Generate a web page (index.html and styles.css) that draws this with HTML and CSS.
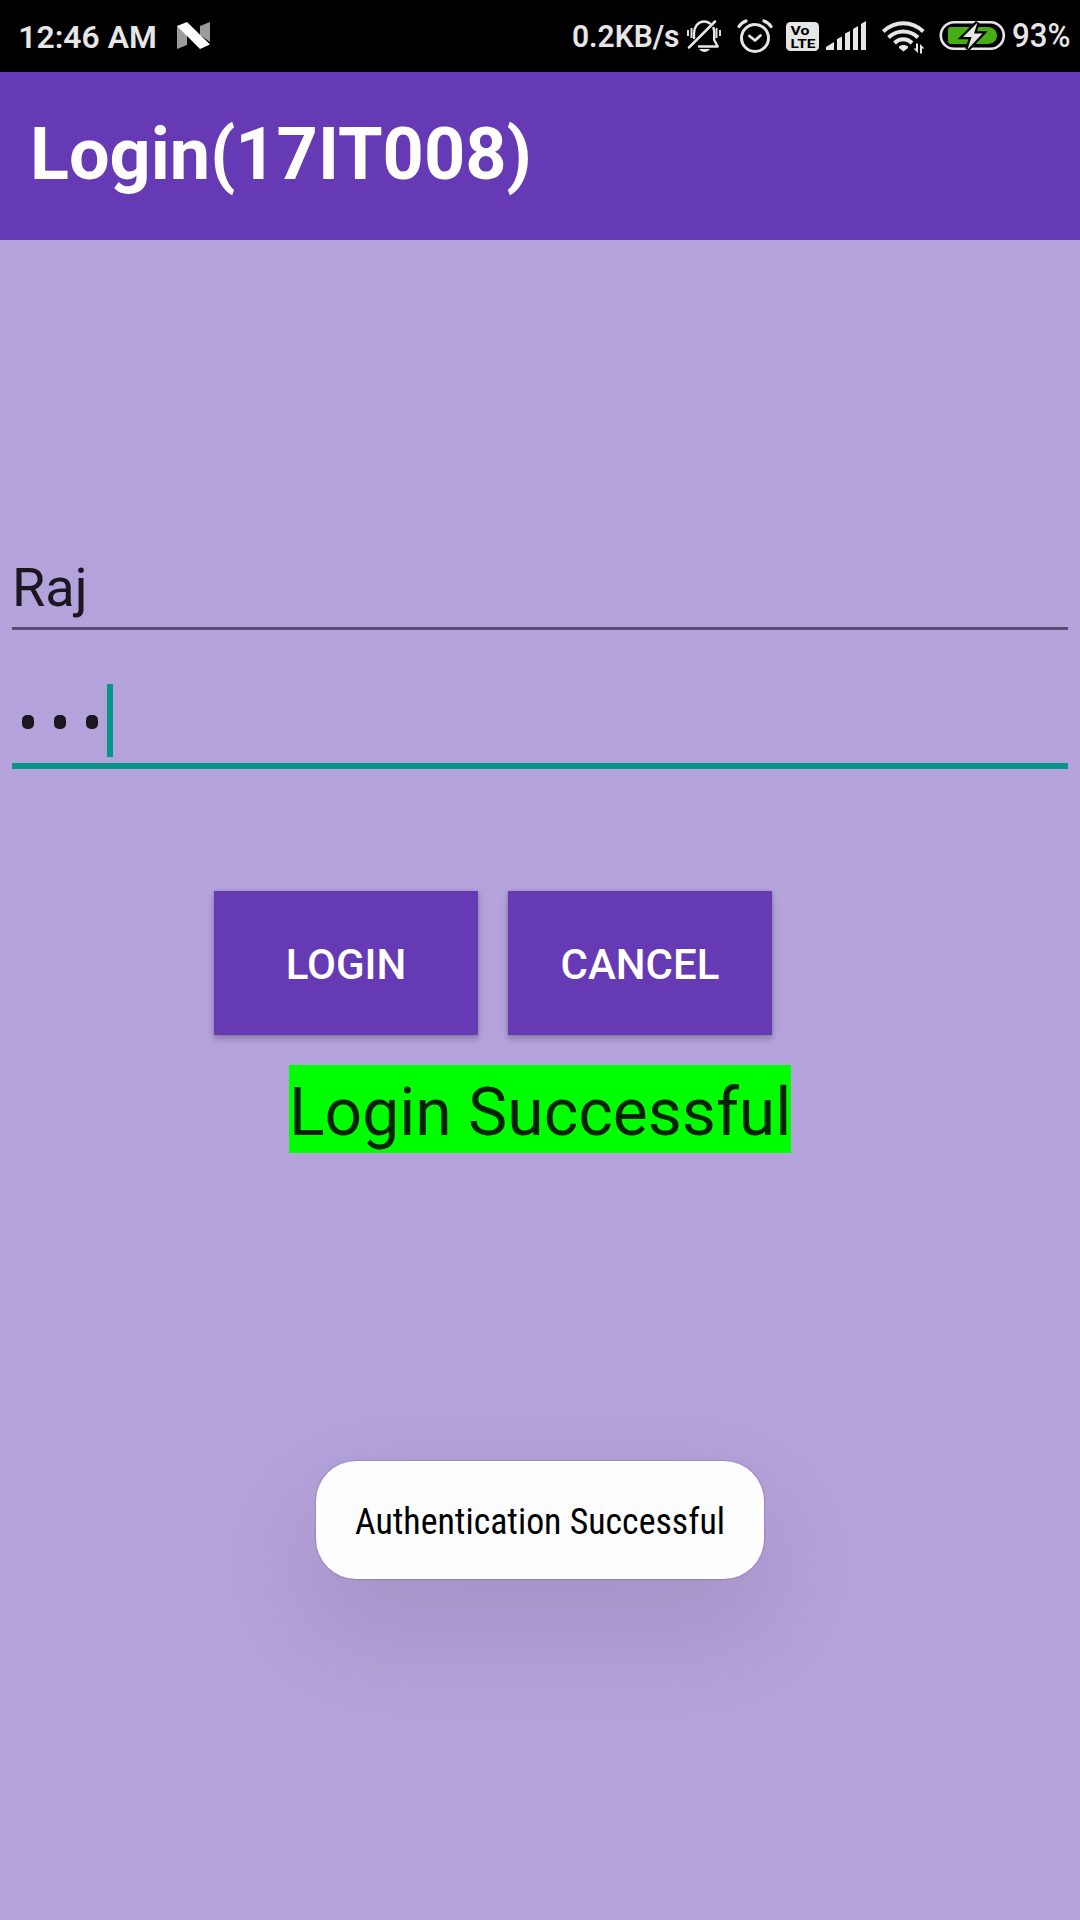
FILE: index.html
```
<!DOCTYPE html>
<html lang="en">
<head>
<meta charset="utf-8">
<title>Login</title>
<link rel="stylesheet" href="styles.css">
</head>
<body>
<div class="screen">
  <header class="status">
    <svg class="clock" viewBox="0 0 160 72"><text x="18.300" y="47.700" textLength="138.500" lengthAdjust="spacingAndGlyphs">12:46 AM</text></svg>
    <svg class="nougat" viewBox="176 0 36 72">
      <path fill="#9c9c9c" d="M177 26l10 5v14l-10 4zM200 26l10-4v20l-10-7z"/>
      <path fill="#fff" d="M177 26l10-4 23 22.500-10 4.500z"/>
    </svg>
    <div class="spacer"></div>
    <svg class="speed" viewBox="570 0 114 72"><text x="572" y="46.700" textLength="107.500" lengthAdjust="spacingAndGlyphs">0.2KB/s</text></svg>
    <svg class="bell" viewBox="684 0 42 72">
      <g fill="none" stroke="#e6e6e6" stroke-width="2.400" stroke-linecap="round" stroke-linejoin="round">
        <path d="M694 38v-5c0-6 4-11.500 10-11.500 2.500 0 4.500.8 6 2M713.500 28c.5 1.500.7 3 .7 5v7l3.500 6.500H699"/>
        <path stroke-width="2.500" d="M689 47.500l26-26"/>
        <path stroke-width="1.900" stroke-linecap="butt" d="M688 30v6M691.500 28v10M716.500 28v10M720 30v6"/>
      </g>
      <path fill="#e6e6e6" d="M699 49h11c-1.500 2-3.500 3-5.500 3s-4-1-5.500-3z"/>
    </svg>
    <svg class="alarm" viewBox="734 0 42 72">
      <g fill="none" stroke="#e6e6e6" stroke-linecap="round" stroke-linejoin="round">
        <circle cx="755" cy="38" r="13.500" stroke-width="3"/>
        <path stroke-width="2.800" d="M749.500 36l5.500 4.500 5.500-5"/>
        <path stroke-width="3.200" d="M739 26.500c1.500-2.500 4-4.500 7-5.500M771 26.500c-1.500-2.500-4-4.500-7-5.500"/>
      </g>
    </svg>
    <svg class="volte" viewBox="784 0 38 72">
      <rect x="786" y="22" width="33" height="29" rx="4.500" fill="#e6e6e6"/>
      <text x="790.500" y="35" textLength="19" lengthAdjust="spacingAndGlyphs">Vo</text>
      <text x="790.500" y="47.700" textLength="25" lengthAdjust="spacingAndGlyphs">LTE</text>
    </svg>
    <svg class="signal" viewBox="824 0 44 72">
      <path fill="#e6e6e6" d="M826 50v-3l8-5v8zM837 50V39l5-2.500V50zM845 50V33.500l5-2.500V50zM853 50V29l5-3v24zM861 50V24l5-3v29z"/>
    </svg>
    <svg class="wifi" viewBox="880 0 46 72">
      <g fill="none" stroke="#e6e6e6" stroke-width="3.900">
        <path d="M883.300 31.500c11.500-11 28.500-11 40 0"/>
        <path d="M888.500 37.500c8.500-8 21-8 29.500 0"/>
        <path d="M894.500 43c5-5 12.500-5 17.500 0"/>
      </g>
      <path fill="#e6e6e6" d="M899 46.500c2.500-2 6.500-2 9 0v1.500l-4.500 3.500-4.500-3.500z"/>
      <path fill="#e6e6e6" d="M916 43.500h2v9.500l-4.500-4.500h2.500zM920 53.500V44l4.500 4.500h-2.500v5z"/>
    </svg>
    <svg class="battery" viewBox="938 0 68 72">
      <rect x="940.800" y="22.200" width="63" height="26.600" rx="13.300" fill="none" stroke="#e6e6e6" stroke-width="2.600"/>
      <path fill="#45ad15" d="M951 27h37c5 0 9 4 9 8.500s-4 8.500-9 8.500h-37c-2 0-3-1-3-2.500V29.500c0-1.500 1-2.500 3-2.500z"/>
      <path fill="#e6e6e6" stroke="#000" stroke-width="4.500" paint-order="stroke" d="M977.500 22.500l-14.500 14.500h8.500l-4 12.500 15-16h-8.500z"/>
    </svg>
    <svg class="percent" viewBox="1010 0 64 72"><text x="1012" y="47.300" textLength="58.500" lengthAdjust="spacingAndGlyphs">93%</text></svg>
  </header>
  <h1 class="appbar">Login(17IT008)</h1>
  <main class="form">
    <div class="field name">Raj</div>
    <div class="field password">
      <span class="dot"></span><span class="dot"></span><span class="dot"></span><span class="caret"></span>
    </div>
    <div class="actions">
      <button class="button" type="button">LOGIN</button>
      <button class="button" type="button">CANCEL</button>
    </div>
    <div class="result">Login Successful</div>
  </main>
  <div class="toast">
    <svg class="message" viewBox="0 0 372 60"><text x="1" y="44" textLength="370" lengthAdjust="spacingAndGlyphs">Authentication Successful</text></svg>
  </div>
</div>
</body>
</html>
```
FILE: styles.css
```
* { box-sizing: border-box; }
body { margin: 0; font-family: Roboto, sans-serif; }
.screen {
  position: relative;
  width: 1080px;
  height: 1920px;
  overflow: hidden;
  background: #b4a2da;
}
.status { display: flex; height: 72px; background: #000; }
.status svg { display: block; flex: none; height: 72px; overflow: visible; }
.status text { fill: #e6e6e6; font-size: 32px; font-weight: 600; }
.clock { width: 160px; }
.nougat { width: 36px; margin-left: 16px; }
.spacer { flex: 1; }
.speed { width: 114px; }
.bell { width: 42px; }
.alarm { width: 42px; margin-left: 8px; }
.volte { width: 38px; margin-left: 8px; }
.status .volte text { fill: #000; font-size: 13px; font-weight: 700; }
.signal { width: 44px; margin-left: 2px; }
.wifi { width: 46px; margin-left: 12px; }
.battery { width: 68px; margin-left: 12px; }
.percent { width: 64px; margin: 0 6px 0 4px; }
.status .percent text { font-size: 33px; font-weight: 500; }
.appbar {
  height: 168px;
  margin: 0;
  padding: 41px 0 0 30px;
  background: #673ab5;
  color: #fff;
  font-size: 72px;
  line-height: 84px;
  font-weight: 700;
}
.form { padding: 312px 12px 0; }
.field { color: #1b1620; }
.name {
  height: 78px;
  border-bottom: 3px solid #5a4a6d;
  font-size: 54px;
  line-height: 72px;
}
.password {
  display: flex;
  align-items: center;
  gap: 20px;
  height: 85px;
  margin-top: 54px;
  padding: 0 0 6px 10px;
  border-bottom: 6px solid #069688;
}
.dot { width: 12px; height: 14px; margin-top: 3px; border-radius: 5px; background: #1b1620; }
.caret { width: 6px; height: 73px; margin-left: -11px; background: #069688; }
.actions { display: flex; gap: 30px; margin: 122px 0 0 202px; }
.button {
  width: 264px;
  height: 144px;
  padding: 2px 0 0;
  border: 0;
  background: #673ab5;
  color: #fff;
  font: 500 42px/49px Roboto, sans-serif;
  box-shadow: 0 4px 6px rgba(0,0,0,.22), 0 0 4px rgba(0,0,0,.12);
}
.result {
  width: 502px;
  height: 88px;
  margin: 29.700px auto 0;
  background: #0f0;
  color: #002400;
  font-size: 66px;
  line-height: 96px;
  text-align: center;
  white-space: nowrap;
}
.toast {
  position: absolute;
  left: 316px;
  top: 1461px;
  display: flex;
  justify-content: center;
  align-items: center;
  width: 448px;
  height: 118px;
  border-radius: 40px;
  background: #fdfdff;
  box-shadow: 0 0 2px rgba(60,30,100,.5), 0 46px 105px rgba(20,0,30,.11);
}
.message { width: 372px; height: 60px; }
.message text { font-size: 36px; font-stretch: 75%; font-weight: 400; fill: #000; }
```
